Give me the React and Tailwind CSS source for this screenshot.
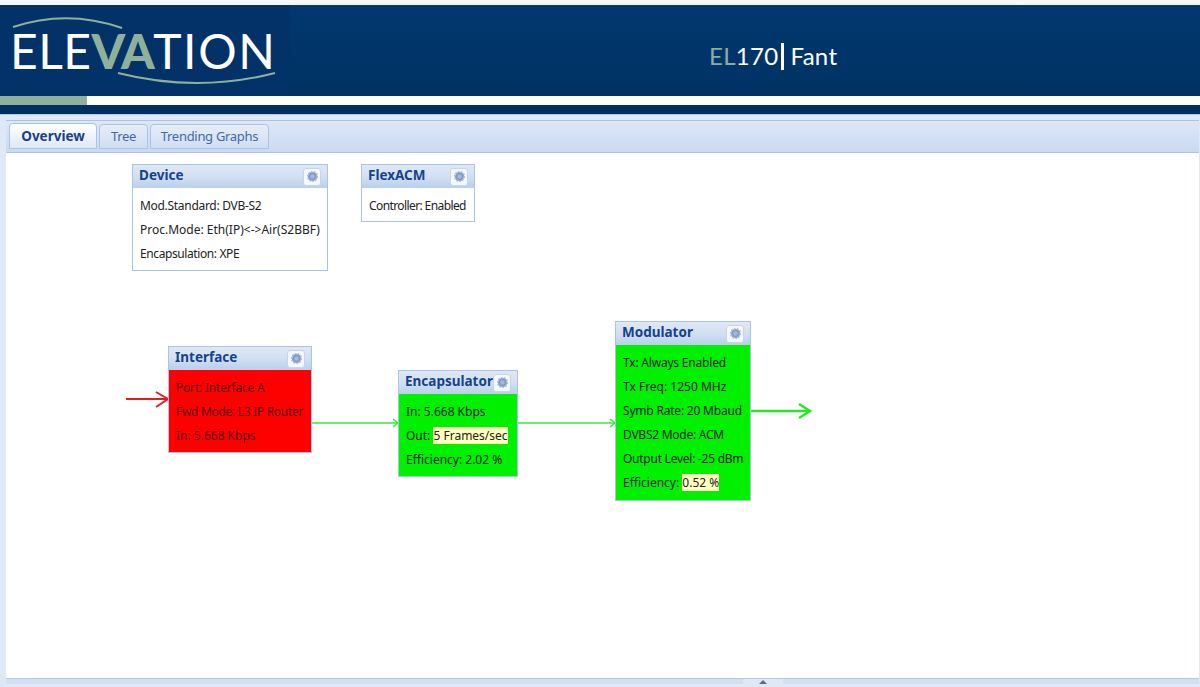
const FONT = "font-['Noto_Sans',sans-serif]";

function GearButton() {
  return (
    <div className="flex h-[18px] w-[18px] items-center justify-center rounded-[3px] border border-[#c5d6ec] bg-[#f4f8fd]">
      <svg width="13" height="13" viewBox="0 0 13 13">
        <circle cx="6.5" cy="6.5" r="4.6" fill="#8098c8" stroke="#a9b9da" strokeWidth="2" strokeDasharray="1.6 1.2" />
        <circle cx="6.5" cy="6.5" r="2.2" fill="#a8b8d8" />
      </svg>
    </div>
  );
}

function Node({ title, rows, className, bodyClass, textClass = "text-[#222]" }) {
  return (
    <div className={`absolute border border-[#a9c4e4] ${className}`}>
      <div className="flex h-[23px] items-center justify-between bg-gradient-to-b from-[#dee8f6] via-[#d3e0f2] to-[#b9cfeb] pr-[6px] pl-[6px]">
        <span className="mt-[-2px] text-[13.5px] leading-none font-bold text-[#15428b]">{title}</span>
        <GearButton />
      </div>
      <div className={`pt-[6px] pl-[7px] ${bodyClass}`}>
        {rows.map((row) => (
          <div
            key={row.label}
            className={`h-6 text-[12px] leading-6 whitespace-nowrap ${textClass} ${row.tracking ?? "tracking-[-0.2px]"}`}
          >
            {row.label} {row.value && <span className="bg-[#ffffc0]">{row.value}</span>}
          </div>
        ))}
      </div>
    </div>
  );
}

function Logo() {
  return (
    <div className="relative h-full w-[290px] bg-[#023268]">
      <svg className="absolute top-0 left-0" width="290" height="91" viewBox="0 0 290 91">
        <path d="M13 22 Q67 4 122 23" fill="none" stroke="#8fb19c" strokeWidth="2" />
        <path d="M118 68 Q197 88 275 68" fill="none" stroke="#8fb19c" strokeWidth="2" />
      </svg>
      <div className="absolute top-[14px] left-[10px] font-['Lato',sans-serif] text-[48px] leading-[64px] font-normal tracking-[0.5px] whitespace-nowrap text-white">
        ELE<span className="font-black tracking-[-1.5px] text-[#8fb19c]">VA</span>
        <span className="tracking-[1.6px]">TION</span>
      </div>
    </div>
  );
}

export default function App() {
  return (
    <div className={`flex h-[687px] w-[1200px] flex-col overflow-hidden bg-[#f6f8fb] pt-[5px] ${FONT}`}>
      {/* Banner */}
      <div className="flex h-[91px] bg-gradient-to-b from-[#02386f] to-[#003264]">
        <Logo />
        <div className="flex flex-1 items-center pt-[11px] pl-[419px] font-['Lato',sans-serif] text-[24px] leading-none tracking-[0.3px] text-white">
          <span className="text-[#8fa9a4]">EL</span>
          <span>170</span>
          <span className="mr-[6px] ml-[3px] h-[27px] w-[3px] bg-white" />
          <span>Fant</span>
        </div>
      </div>
      <div className="flex h-[9px] bg-white">
        <div className="w-[87px] bg-[#8fb19c]" />
      </div>
      <div className="h-[9px] bg-[#022f5f]" />

      {/* Tab panel */}
      <div className="flex min-h-0 flex-1 flex-col border-t border-[#b5c9e4] bg-[#dfe8f6] pr-[1px] pl-[6px]">
        <div className="mt-[5px] flex h-[33px] items-end gap-[2px] border-y border-[#a9c4e4] bg-gradient-to-b from-[#dde7f5] to-[#cbdaf0] pb-[3px] pl-[3px]">
          <div className="flex h-[26px] w-[88px] items-center justify-center rounded-t-[4px] border border-[#a9c4e4] bg-gradient-to-b from-white to-[#dfe8f6] text-[13.5px] font-bold text-[#15428b]">
            Overview
          </div>
          <div className="flex h-[25px] w-[49px] items-center justify-center rounded-t-[4px] border border-[#a9c4e4] bg-gradient-to-b from-[#e6edf8] to-[#cfdef3] text-[13px] tracking-[-0.3px] text-[#416aa3]">
            Tree
          </div>
          <div className="flex h-[25px] w-[119px] items-center justify-center rounded-t-[4px] border border-[#a9c4e4] bg-gradient-to-b from-[#e6edf8] to-[#cfdef3] text-[13px] tracking-[-0.3px] text-[#416aa3]">
            Trending Graphs
          </div>
        </div>

        {/* Diagram */}
        <div className="relative flex-1 bg-white">
          <svg className="absolute inset-0 h-full w-full">
            <path d="M120 246 H161 M150 239 L162 246 L150 254" fill="none" stroke="#e02020" strokeWidth="2" />
            <path d="M306 270 H392 M387 266 L392 270 L387 274" fill="none" stroke="#3fe845" strokeWidth="1.5" />
            <path d="M512 270 H609 M604 266 L609 270 L604 274" fill="none" stroke="#3fe845" strokeWidth="1.5" />
            <path d="M745 258 H804 M793 251 L804 258 L793 265" fill="none" stroke="#28e628" strokeWidth="2.5" />
          </svg>
          <Node
            title="Device"
            className="top-[11px] left-[126px] w-[196px]"
            bodyClass="bg-white pb-[4px]"
            rows={[
              { label: "Mod.Standard: DVB-S2", tracking: "tracking-[-0.3px]" },
              { label: "Proc.Mode: Eth(IP)<->Air(S2BBF)", tracking: "tracking-normal" },
              { label: "Encapsulation: XPE", tracking: "tracking-[-0.4px]" },
            ]}
          />
          <Node
            title="FlexACM"
            className="top-[11px] left-[355px] w-[114px]"
            bodyClass="bg-white pb-[3px]"
            rows={[{ label: "Controller: Enabled", tracking: "tracking-[-0.6px]" }]}
          />
          <Node
            title="Interface"
            className="top-[193px] left-[162px] w-[144px]"
            bodyClass="bg-[#fd0000] pb-[4px]"
            textClass="text-[#5a0a0a]"
            rows={[
              { label: "Port: Interface A" },
              { label: "Fwd Mode: L3 IP Router", tracking: "tracking-[-0.3px]" },
              { label: "In: 5.668 Kbps", tracking: "tracking-normal" },
            ]}
          />
          <Node
            title="Encapsulator"
            className="top-[217px] left-[392px] w-[120px]"
            bodyClass="bg-[#00f000] pb-[4px]"
            rows={[
              { label: "In: 5.668 Kbps", tracking: "tracking-normal" },
              { label: "Out:", value: "5 Frames/sec", tracking: "tracking-normal" },
              { label: "Efficiency: 2.02 %", tracking: "tracking-normal" },
            ]}
          />
          <Node
            title="Modulator"
            className="top-[168px] left-[609px] w-[136px]"
            bodyClass="bg-[#00f000] pb-[5px]"
            rows={[
              { label: "Tx: Always Enabled" },
              { label: "Tx Freq: 1250 MHz", tracking: "tracking-normal" },
              { label: "Symb Rate: 20 Mbaud" },
              { label: "DVBS2 Mode: ACM", tracking: "tracking-[-0.25px]" },
              { label: "Output Level: -25 dBm", tracking: "tracking-[-0.25px]" },
              { label: "Efficiency:", value: "0.52 %", tracking: "tracking-normal" },
            ]}
          />
        </div>

        {/* Collapse bar */}
        <div className="h-[6px] border-t border-[#b5c9e4] bg-[#d3e0f2]">
          <div className="ml-[737px] flex h-[5px] w-[40px] items-center justify-center bg-[#dfe8f6]">
            <div className="h-0 w-0 border-x-[4px] border-b-[4px] border-x-transparent border-b-[#5a6e8c]" />
          </div>
        </div>
        <div className="h-[3px]" />
      </div>
    </div>
  );
}
